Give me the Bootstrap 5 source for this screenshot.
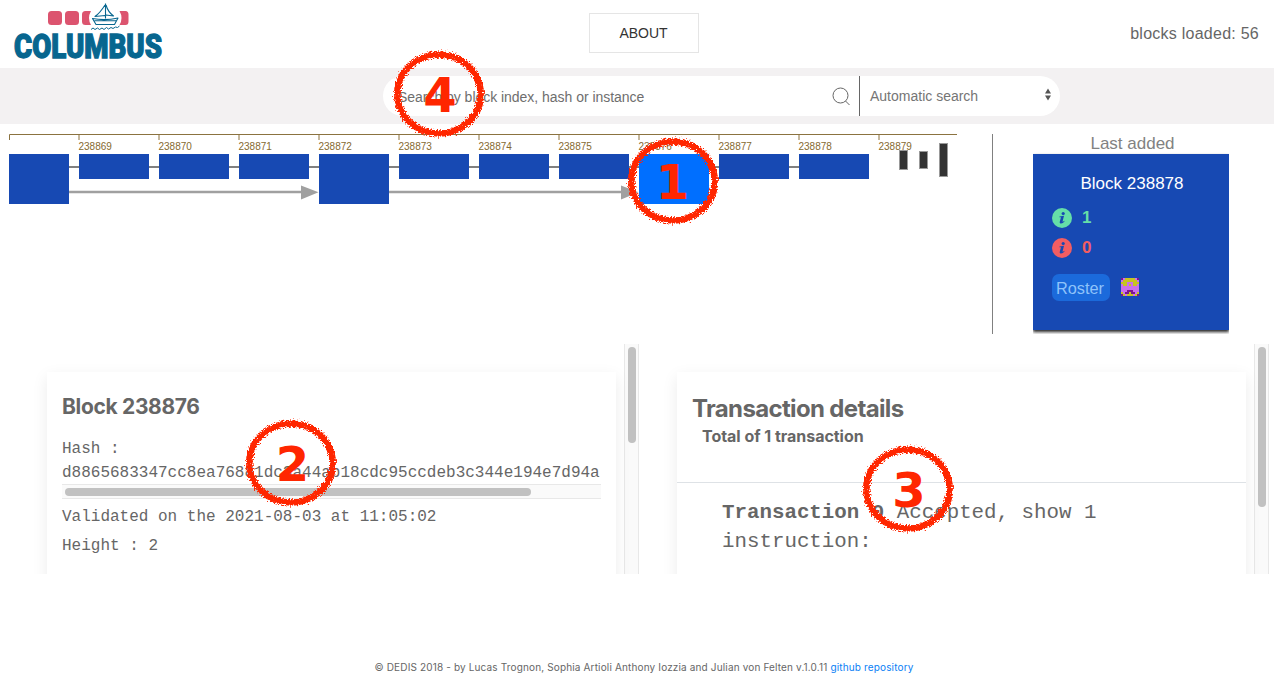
<!DOCTYPE html>
<html lang="en">
<head>
<meta charset="utf-8">
<meta name="viewport" content="width=device-width, initial-scale=1">
<title>Columbus</title>
<link rel="stylesheet" href="https://cdn.jsdelivr.net/npm/bootstrap@5.3.0/dist/css/bootstrap.min.css">
<style>
body{font-family:"Liberation Sans",Arial,sans-serif;color:#666;height:675px;overflow:hidden;background:#fff}
.topbar{height:68px;padding:0 15px 0 0}
.topbar>div{flex:1 1 0}
.about-btn{width:110px;height:40px;border:1px solid #e5e5e5;border-radius:0;font-size:14px;color:#333;padding:0;margin:0 0 2px 28px}
.loaded{font-size:16px;line-height:24px;letter-spacing:.25px}
.searchbar{height:56px;background:#f3f1f2;padding:8px 0 8px 383px}
.search-pill{width:677px;height:40px;border-radius:20px;background:#fff;overflow:hidden}
.search-pill .field{width:476px;padding:2px 8px 0 15px;font-size:14px;color:#6e6e6e;letter-spacing:-.03px}
.search-pill .mode{border-left:1px solid #666;padding:0 8px 0 10px;font-size:14px;color:#757575}
.chain-row{height:220px;padding-top:10px}
.chain{width:992px;height:200px;border-right:1px solid #808080;box-sizing:content-box}
.last{width:281px;font-size:17px;padding-right:5px}
.last-title{line-height:20px;color:#828282;height:20px;width:196px;text-align:center;margin-left:40px;padding-left:3px}
.last-card{width:196px;height:176px;margin-left:40px;background:#1749b3;border-radius:0;border:0;color:#fff;padding:20px 19px 0;box-shadow:0 2px 3px #222;clip-path:inset(-4px 0 -4px 0)}
.last-card .head{line-height:20px;padding-left:2px}
.cnt{height:20px;line-height:20px;font-weight:bold}
.cnt svg{margin-right:10px}
.ok{color:#65dfa8;margin-top:14px}
.ko{color:#f25d62;margin-top:10px}
.roster{width:58px;height:27px;line-height:29px;border-radius:7px;background:#1b6adb;color:#8fc3fa;padding-left:4px;font-size:16.300px}
.panels{height:230px}
.pane{height:230px;overflow:hidden}
.pane-a{width:639px;padding:28px 0 0 47px}
.pane-b{width:630px;padding:28px 0 0 38px}
.sheet{width:569px;height:260px;border:0;border-radius:0;box-shadow:0 5px 15px rgba(0,0,0,.08);color:#666;background:#fff}
.vbar{width:15px;height:230px;margin-top:-28px;background:#fafafa;border:solid #e8e8e8;border-width:0 1px;padding:3px 0 0 3px}
.thumb{width:8px;border-radius:4px;background:#c1c1c1}
.ttl{font-family:Inter,sans-serif;font-weight:700;white-space:nowrap}
.mono{font-family:"Liberation Mono",monospace;white-space:nowrap}
.hbar{width:539px;height:15px;background:#fafafa;border:solid #e8e8e8;border-width:1px 0;padding:3px}
.hbar .thumb{width:466px;height:8px}
.foot{font-family:Inter,sans-serif;font-size:10px;line-height:15px;padding-top:86px;margin-left:14px;letter-spacing:.15px}
.foot a{color:#0a80f5;text-decoration:none}
.pin{position:absolute;overflow:visible;pointer-events:none}
.pin text{font-family:"DejaVu Sans",sans-serif;font-weight:bold;font-size:48px;fill:#ff2600;text-anchor:middle}
</style>
</head>
<body class="position-relative">
<header class="topbar d-flex align-items-center">
  <div class="align-self-start">
    <svg width="220" height="68" viewBox="0 0 220 68" class="d-block">
      <g fill="#dc546f"><rect x="48" y="11" width="14" height="14" rx="3.5"/><rect x="65" y="11" width="14" height="14" rx="3.5"/>
      <path d="M91 11H85.500Q82 11 82 14.500V21.500Q82 25 85.500 25H91Q87 18 91 11Z"/><path d="M119.500 11H125.500Q128.500 11 128.500 14.500V21.500Q128.500 25 125.500 25H119.500Q123.500 18 119.500 11Z"/></g>
      <g fill="none" stroke="#07668f" stroke-width="1.1" stroke-linejoin="round"><path d="M105.500 3.500V18.500M105 5Q100 13 95 16.500L105 15.500M106 5Q108 12 113.500 16L106 15M92.500 18.500Q105 21 118 18L114.500 24.500H96ZM94.500 20.800H116"/>
      <path stroke-width="1" d="M91 29.500l2-1.500l2 1.500l2.500-1.500l2 1.500l2.500-1.500l2 1.500l2.500-2l2 1.500l2.500-1.500l2 1l2.500-1.500l2 .5l2-1.500"/></g>
      <text x="14" y="58" font-family="Roboto" font-weight="900" font-size="33" fill="#07668f" stroke="#07668f" stroke-width="1.300" textLength="148" lengthAdjust="spacingAndGlyphs">COLUMBUS</text>
    </svg>
  </div>
  <button class="btn about-btn">ABOUT</button>
  <div class="text-end loaded">blocks loaded: 56</div>
</header>
<section class="searchbar">
  <div class="search-pill d-flex">
    <div class="field d-flex align-items-center justify-content-between"><span>Search by block index, hash or instance</span>
      <svg width="20" height="20" viewBox="0 0 20 20" fill="none" stroke="#666" stroke-width="1"><circle cx="9.500" cy="8.500" r="7.500"/><path d="M14.500 14L18.500 18"/></svg></div>
    <div class="mode d-flex align-items-center justify-content-between flex-grow-1"><span>Automatic search</span>
      <svg width="8" height="14" viewBox="0 0 8 14" fill="#555" class="mb-1"><path d="M4 1.500L7 6.500H1ZM1 8.500H7L4 13.500Z"/></svg></div>
  </div>
</section>
<section class="chain-row d-flex">
  <svg class="chain" width="992" height="200" viewBox="0 134 992 200" font-size="10" fill="#85692f">
    <path d="M9.500 140V134.500H957M79 134V140M159 134V140M239 134V140M319 134V140M399 134V140M479 134V140M559 134V140M639 134V140M719 134V140M799 134V140M879 134V140" fill="none" stroke="#8b7340"/>
    <g><text x="78.500" y="150">238869</text><text x="158.500" y="150">238870</text><text x="238.500" y="150">238871</text><text x="318.500" y="150">238872</text><text x="398.500" y="150">238873</text><text x="478.500" y="150">238874</text><text x="558.500" y="150">238875</text><text x="638.500" y="150">238876</text><text x="718.500" y="150">238877</text><text x="798.500" y="150">238878</text><text x="878.500" y="150">238879</text></g>
    <path d="M69 167H869" stroke="#808080" stroke-width="2"/>
    <path d="M69 192H302M389 192H622" stroke="#a0a0a0" stroke-width="2.500"/>
    <path d="M301 185.500L318.500 192.300L301 199.500ZM621 185.500L638.500 192.300L621 199.500Z" fill="#a0a0a0"/>
    <path fill="#1749b3" d="M9 154h60v50H9ZM79 154h70v25H79ZM159 154h70v25H159ZM239 154h70v25H239ZM319 154h70v50H319ZM399 154h70v25H399ZM479 154h70v25H479ZM559 154h70v25H559ZM719 154h70v25H719ZM799 154h70v25H799Z"/>
    <rect x="639" y="154" width="70" height="50" fill="#006fff"/>
    <g fill="#333" stroke="#999"><rect x="899.500" y="150.500" width="8" height="19"/><rect x="919.500" y="151.500" width="8" height="17"/><rect x="939.500" y="143.500" width="8" height="33"/></g>
  </svg>
  <div class="last">
    <div class="last-title">Last added</div>
    <div class="card last-card">
      <div class="head text-center">Block 238878</div>
      <div class="cnt ok d-flex"><svg width="20" height="20" viewBox="0 0 20 20"><circle cx="10" cy="10" r="10" fill="#65dfa8"/><g fill="#1749b3"><circle cx="11.200" cy="5.500" r="1.600"/><path d="M7.500 8.500L12 7.800L10.500 13.800Q11 14 12.300 12.800L12.500 13.500Q10.500 16 8.400 15.500Q7.300 15 7.800 13.500L9 9.300H7.400Z"/></g></svg>1</div>
      <div class="cnt ko d-flex"><svg width="20" height="20" viewBox="0 0 20 20"><circle cx="10" cy="10" r="10" fill="#f25d62"/><g fill="#1749b3"><circle cx="11.200" cy="5.500" r="1.600"/><path d="M7.500 8.500L12 7.800L10.500 13.800Q11 14 12.300 12.800L12.500 13.500Q10.500 16 8.400 15.500Q7.300 15 7.800 13.500L9 9.300H7.400Z"/></g></svg>0</div>
      <div class="d-flex mt-3"><div class="roster">Roster</div>
        <svg width="18" height="18" viewBox="0 0 9 9" shape-rendering="crispEdges" class="mt-1" style="margin-left:11px"><rect width="9" height="9" fill="#ca70ec"/><path fill="#c7c421" d="M2 0h5v1H2ZM1 1h1v1H1ZM7 1h1v1H7ZM0 2h3v1H0ZM6 2h3v1H6ZM1 3h2v1H1ZM6 3h2v1H6ZM4 3h1v1H4ZM0 7h1v1H0ZM8 7h1v1H8ZM1 8h1v1H1ZM7 8h1v1H7ZM3 8h3v1H3ZM4 7h1v1H4ZM2 1h5v1H2Z"/><path fill="#7b168e" d="M0 0h1v1H0ZM8 0h1v1H8ZM3 6h3v1H3ZM2 7h2v1H2ZM5 7h2v1H5ZM0 8h1v1H0ZM8 8h1v1H8Z"/></svg></div>
    </div>
  </div>
</section>
<main class="panels d-flex">
  <section class="pane pane-a d-flex justify-content-between">
    <article class="card sheet">
      <div class="ttl" style="font-size:21px;line-height:28px;padding:21px 15px 0;letter-spacing:-.33px">Block 238876</div>
      <div class="mono" style="font-size:16px;line-height:24px;padding:16px 15px 0">Hash :<br>d8865683347cc8ea76881dc3a44ab18cdc95ccdeb3c344e194e7d94a</div>
      <div class="hbar" style="margin:-1px 0 0 15px"><div class="thumb"></div></div>
      <div class="mono" style="font-size:16px;line-height:29px;padding:4px 15px 0">Validated on the 2021-08-03 at 11:05:02<br>Height : 2</div>
    </article>
    <div class="vbar"><div class="thumb" style="height:96px"></div></div>
  </section>
  <section class="pane pane-b d-flex justify-content-between">
    <article class="card sheet">
      <div class="ttl" style="font-size:24px;line-height:32px;padding:21px 15px 0;letter-spacing:-.65px">Transaction details</div>
      <div class="ttl" style="font-size:16px;line-height:24px;padding:0 25px;margin-top:-1px;letter-spacing:-.03px">Total of 1 transaction</div>
      <div class="border-top mono" style="font-size:20.800px;line-height:29px;margin-top:34px;padding:15px 45px"><b>Transaction 0</b> Accepted, show 1<br>instruction:</div>
    </article>
    <div class="vbar"><div class="thumb" style="height:160px"></div></div>
  </section>
</main>
<footer class="foot text-center">© DEDIS 2018 - by Lucas Trognon, Sophia Artioli Anthony Iozzia and Julian von Felten v.1.0.11 <a href="#">github repository</a></footer>

<!-- numbered callouts drawn over the interface -->
<svg class="pin" style="left:628px;top:138px" width="90" height="86"><defs>
  <filter id="rough" x="-10%" y="-10%" width="120%" height="120%"><feTurbulence type="fractalNoise" baseFrequency=".7" numOctaves="2" seed="4" result="n"/><feDisplacementMap in="SourceGraphic" in2="n" scale="7" xChannelSelector="R" yChannelSelector="G"/></filter>
  <g id="ring"><ellipse cx="45" cy="43" rx="41.700" ry="39.500" fill="none" stroke="#ff2600" stroke-width="6.500" filter="url(#rough)"/></g></defs>
  <use href="#ring"/><text x="44.500" y="61">1</text></svg>
<svg class="pin" style="left:246px;top:420px" width="90" height="86"><use href="#ring"/><text x="46.500" y="61">2</text></svg>
<svg class="pin" style="left:863px;top:446px" width="90" height="86"><use href="#ring"/><text x="46" y="61">3</text></svg>
<svg class="pin" style="left:394px;top:51px" width="90" height="86"><use href="#ring"/><text x="46" y="61">4</text></svg>
<script src="https://cdn.jsdelivr.net/npm/bootstrap@5.3.0/dist/js/bootstrap.bundle.min.js"></script>
</body>
</html>
